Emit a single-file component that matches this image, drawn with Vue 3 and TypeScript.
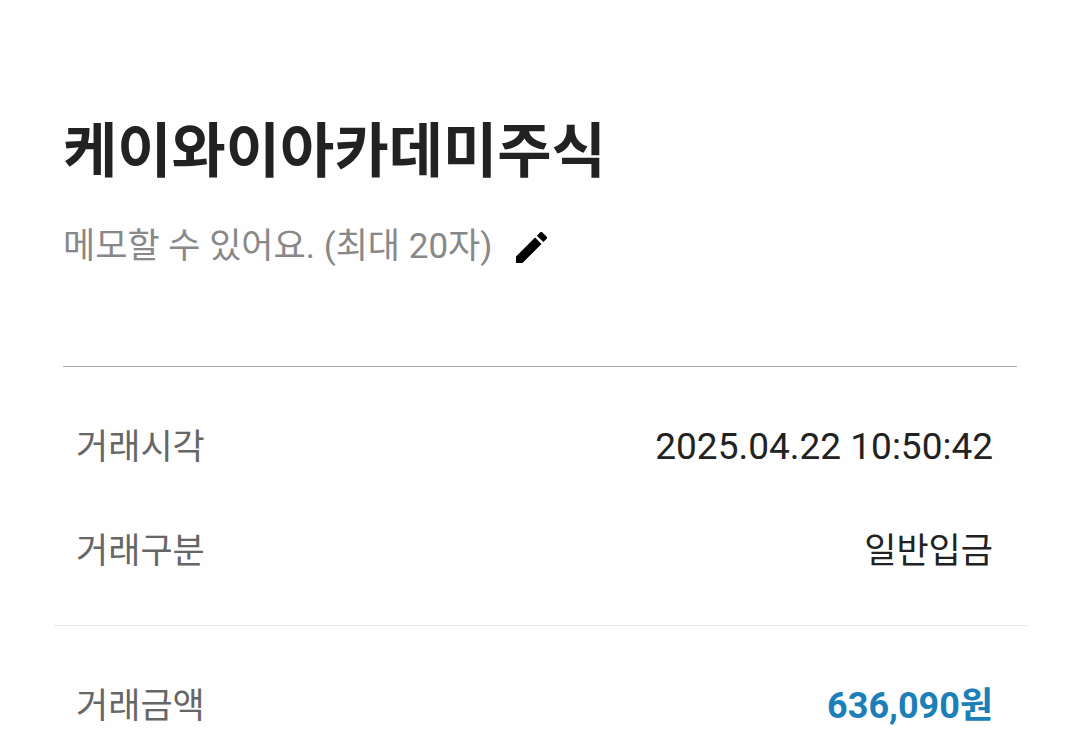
<script setup lang="ts">
interface DetailRow {
  label: string
  value: string
  numeric?: boolean
}

const title: string = '케이와이아카데미주식'
const memoHint: string = '메모할 수 있어요. (최대 20자)'
const details: DetailRow[] = [
  { label: '거래시각', value: '2025.04.22 10:50:42', numeric: true },
  { label: '거래구분', value: '일반입금' },
]
const amount: DetailRow = { label: '거래금액', value: '636,090원' }
</script>

<template>
  <main class="page">
    <header class="head">
      <h1 class="title">{{ title }}</h1>
      <button class="memo" type="button">
        <span>{{ memoHint }}</span>
        <svg class="pencil" viewBox="3 3 18 18" aria-hidden="true">
          <path d="M3 17.25V21h3.75L17.81 9.94l-3.75-3.75L3 17.25zM20.71 7.04a.996.996 0 0 0 0-1.41l-2.34-2.34a.996.996 0 0 0-1.41 0l-1.83 1.83 3.75 3.75 1.83-1.83z" />
        </svg>
      </button>
    </header>
    <dl class="details">
      <div v-for="row in details" :key="row.label" class="row">
        <dt>{{ row.label }}</dt>
        <dd :class="{ numeric: row.numeric }">{{ row.value }}</dd>
      </div>
    </dl>
    <dl class="total">
      <div class="row">
        <dt>{{ amount.label }}</dt>
        <dd class="amount">{{ amount.value }}</dd>
      </div>
    </dl>
  </main>
</template>

<style>
body {
  margin: 0;
  background: #fefefe;
}
</style>

<style scoped>
.page {
  padding: 116px 52px 0 54px;
  font-family: Roboto, "Noto Sans CJK KR", sans-serif;
  color: #222;
}
.head {
  margin: 0 11px 0 9px;
  padding-bottom: 94px;
  border-bottom: 1px solid #aaa;
}
.title {
  margin: 0;
  font-size: 59px;
  line-height: 72px;
  font-weight: 700;
}
.memo {
  display: flex;
  align-items: center;
  gap: 24px;
  margin: 34px 0 0;
  padding: 0;
  border: 0;
  background: none;
  font: inherit;
  font-size: 35px;
  line-height: 50px;
  color: #888;
  cursor: pointer;
}
.pencil {
  width: 31px;
  height: 31px;
  fill: #000;
}
.details,
.total {
  margin: 0;
  padding: 29px 35px 21px 22px;
}
.total {
  padding-bottom: 0;
}
.details {
  border-bottom: 1px solid #e8e8e8;
}
.row {
  display: flex;
  justify-content: space-between;
  align-items: baseline;
  padding: 26px 0;
  font-size: 35px;
  line-height: 52px;
}
.total .row {
  padding-bottom: 8px;
}
dt {
  color: #666;
}
dd {
  margin: 0;
}
.numeric {
  font-size: 37px;
  line-height: 48px;
}
.amount {
  font-size: 36px;
  line-height: 48px;
  font-weight: 700;
  color: #1c7fb8;
}
</style>
